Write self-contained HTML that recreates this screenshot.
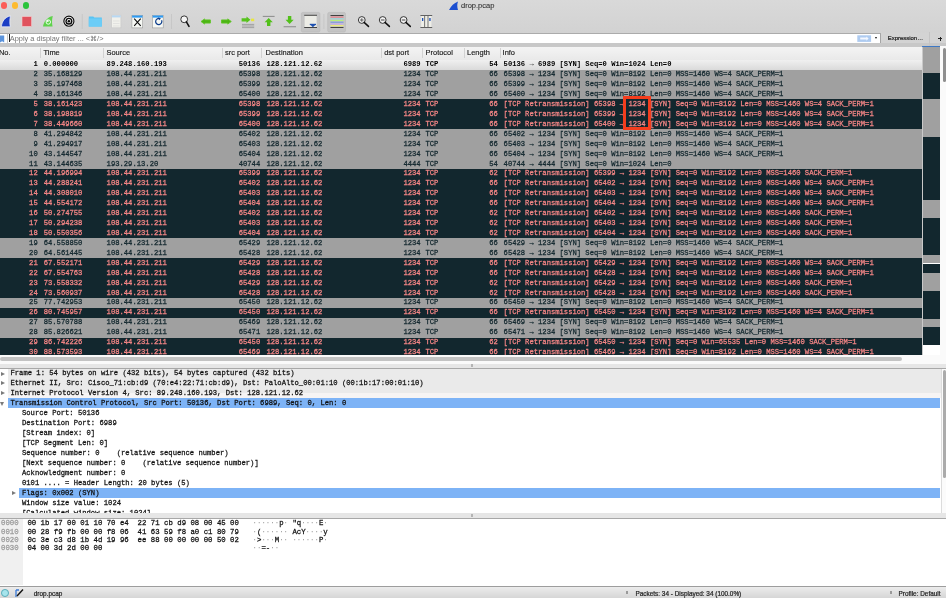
<!DOCTYPE html>
<html><head><meta charset="utf-8"><style>
*{margin:0;padding:0;box-sizing:border-box}
html,body{width:946px;height:598px;overflow:hidden;background:#fff;position:relative}
#wrap{position:absolute;left:0;top:0;width:946px;height:598px;will-change:transform}
body{font-family:"Liberation Sans",sans-serif;-webkit-font-smoothing:antialiased}
.abs{position:absolute}
#tb{position:absolute;left:0;top:0;width:946px;height:33px;background:linear-gradient(#d9d9d9,#d2d2d2)}
#title{position:absolute;left:461px;top:1.2px;font-size:7.5px;color:#333;white-space:pre;-webkit-text-stroke:0.1px #333}
#filt{position:absolute;left:0;top:33px;width:946px;height:14px;background:#d3d3d3}
#fin{position:absolute;left:0;top:32.9px;width:881px;height:10.1px;background:#fff;border-top:0.8px solid #ababab;border-right:1px solid #a5a5a5}
#ph{position:absolute;left:9.8px;top:34.2px;font-size:7.4px;color:#737373;white-space:pre}
#hdr{position:absolute;left:0;top:46.9px;width:922px;height:13px;background:linear-gradient(#f4f4f4,#e9e9e9)}
.ht{position:absolute;top:1.6px;font-size:7.45px;color:#1a1a1a;white-space:pre;-webkit-text-stroke:0.15px #1a1a1a}
.hsep{position:absolute;top:1.5px;width:1px;height:10px;background:#d2d2d2}
#plist{position:absolute;left:0;top:0;width:922px;height:355px;overflow:hidden}
.row{position:absolute;left:0;width:922px;height:9.94px;font-family:"Liberation Mono",monospace;font-size:7.185px;white-space:pre;-webkit-text-stroke:0.25px currentColor}
.rs{background:linear-gradient(#f0f0f0,#dadada);color:#000;font-weight:bold;-webkit-text-stroke:0}
.rg{background:#a0a0a0;color:#12272e}
.rd{background:#12272e;color:#f78787}
.c{position:absolute;top:0.7px;line-height:8px;transform:scaleY(1.1);transform-origin:0 75%}
.dt{position:absolute;font-family:"Liberation Mono",monospace;font-size:7.185px;white-space:pre;color:#111;line-height:8px;margin-top:0.6px;transform:scaleY(1.1);transform-origin:0 75%;-webkit-text-stroke:0.25px currentColor}
.dsel{position:absolute;width:940.3px;height:9.7px;background:#7db3f6}
.arr{position:absolute;width:0;height:0}
.ar{border-left:4px solid #7a7a7a;border-top:2.5px solid transparent;border-bottom:2.5px solid transparent}
.ad{border-top:4px solid #7a7a7a;border-left:2.5px solid transparent;border-right:2.5px solid transparent}
.hx{position:absolute;font-family:"Liberation Mono",monospace;font-size:7.35px;white-space:pre;color:#111;line-height:8px;transform:scaleY(1.1);transform-origin:0 75%;-webkit-text-stroke:0.25px currentColor}
.off{color:#9a9a9a}
.dot{font-weight:normal;color:#9a9a9a;-webkit-text-stroke:0}
#status{position:absolute;left:0;top:585.5px;width:946px;height:12.5px;background:linear-gradient(#ececec,#d6d6d6);border-top:1px solid #9d9d9d}
.st{position:absolute;font-size:6.42px;color:#1d1d1d;white-space:pre;-webkit-text-stroke:0.2px #1d1d1d}
</style></head><body><div id="wrap">
<div id="tb"></div>
<div class="abs" style="left:0.6px;top:2.3px;width:6.4px;height:6.4px;border-radius:50%;background:#fb5d57"></div>
<div class="abs" style="left:11.6px;top:2.3px;width:6.4px;height:6.4px;border-radius:50%;background:#fdbb2f"></div>
<div class="abs" style="left:22.6px;top:2.3px;width:6.4px;height:6.4px;border-radius:50%;background:#2bc43c"></div>
<svg class="abs" style="left:448px;top:1px" width="11" height="10" viewBox="0 0 11 10"><path d="M1 9 C3 5 6 2 10 0.5 C9 3 9 6 10 9 Z" fill="#1c4fd0"/></svg>
<div id="title">drop.pcap</div>
<svg class="abs" style="left:0;top:0" width="946" height="33" viewBox="0 0 946 33">
<!-- shark fin -->
<path d="M1.4 26.8 C1.9 21 5.2 17 10.5 15.9 C9.6 19.6 9.6 23.2 10.3 26.8 Z" fill="#1d3ec4" stroke="#f4f6ff" stroke-width="0.7"/>
<!-- stop -->
<rect x="22" y="16.5" width="9.6" height="9.9" fill="#e0525d" stroke="#f3d0d0" stroke-width="0.6"/>
<!-- restart fin -->
<path d="M43 26.6 C44 21 47.5 17.2 52.8 16 C51.8 19.5 51.8 23 52.6 26.6 Z" fill="#5fd24c"/>
<circle cx="48.3" cy="22" r="2.2" fill="none" stroke="#eaffea" stroke-width="1"/>
<circle cx="47.8" cy="21" r="0.9" fill="#fff"/>
<!-- options gear -->
<circle cx="68.9" cy="21.2" r="6" fill="#f6f6f6"/>
<circle cx="68.9" cy="21.2" r="5.05" fill="none" stroke="#0a0a0a" stroke-width="1.2"/>
<circle cx="68.9" cy="21.2" r="3.5" fill="#0a0a0a"/>
<circle cx="68.9" cy="21.2" r="2.1" fill="#fff"/>
<circle cx="68.9" cy="21.2" r="1.3" fill="#0a0a0a"/>
<!-- sep -->
<rect x="81.8" y="14" width="0.8" height="15" fill="#c4c4c4"/>
<!-- folder -->
<path d="M88.8 16.4 h4.5 l1 1.2 h7.5 v9 h-13 Z" fill="#58c3f3"/>
<rect x="88.8" y="18.5" width="13" height="8.1" fill="#6ccdf7"/>
<!-- save disabled -->
<rect x="111.7" y="15.2" width="9.2" height="12.6" fill="#f1f1ec" stroke="#c9c9c9" stroke-width="0.6"/>
<rect x="111.9" y="15.4" width="8.8" height="2" fill="#b8d8f2"/>
<path d="M113 21 h6.5 M113 23.5 h6.5 M113 26 h6.5" stroke="#d8d8d8" stroke-width="0.6"/>
<!-- close -->
<rect x="131.9" y="15.3" width="10.8" height="12.6" fill="#f6f8f4" stroke="#9a9a9a" stroke-width="0.6"/>
<rect x="132.1" y="15.5" width="10.4" height="2.1" fill="#2d9af2"/>
<path d="M134.2 18.6 L140.7 25.8 M140.7 18.6 L134.2 25.8" stroke="#0d0d0d" stroke-width="1.1"/>
<!-- reload -->
<rect x="152.4" y="15.3" width="10.8" height="12.6" fill="#f6f8f4" stroke="#9a9a9a" stroke-width="0.6"/>
<rect x="152.6" y="15.5" width="10.4" height="2.1" fill="#2d9af2"/>
<path d="M159.8 18.6 A3.1 3.1 0 1 0 161.6 20.3" fill="none" stroke="#0b3c8c" stroke-width="1.2"/>
<path d="M158.3 17.6 L161 18.6 L159 20.2 Z" fill="#0b3c8c"/>
<!-- sep -->
<rect x="171" y="14" width="0.8" height="15" fill="#c4c4c4"/>
<!-- find -->
<circle cx="184.2" cy="19.3" r="3.4" fill="#f4f4f4" stroke="#222" stroke-width="0.9"/>
<path d="M186.4 21.9 L189 26.3" stroke="#111" stroke-width="1.6" stroke-linecap="round"/>
<!-- back -->
<path d="M201 21.5 L204.6 18.9 V19.9 H210.4 V23.1 H204.6 V24.1 Z" fill="#4cb514" stroke="#62c428" stroke-width="0.9" stroke-linejoin="round"/>
<!-- forward -->
<path d="M231.3 21.5 L227.7 18.9 V19.9 H221.5 V23.1 H227.7 V24.1 Z" fill="#4cb514" stroke="#62c428" stroke-width="0.9" stroke-linejoin="round"/>
<!-- go to packet -->
<path d="M250.4 19.8 L246.5 16.6 V18.2 H241.6 V21.4 H246.5 V23.0 Z" fill="#56c21c"/>
<rect x="251" y="18.6" width="3.2" height="2.6" fill="#e9e640"/>
<path d="M242 24.4 h12.2 M242 26 h12.2 M242 27.6 h12.2" stroke="#8c8c8c" stroke-width="0.7"/>
<!-- first packet -->
<rect x="262.8" y="15.9" width="11.8" height="0.8" fill="#777"/>
<path d="M268.7 18 L272.8 22.2 H270.4 V25.9 H267 V22.2 H264.6 Z" fill="#52c01a"/>
<!-- last packet -->
<rect x="283.6" y="26.4" width="12.4" height="0.8" fill="#777"/>
<path d="M289.6 24 L293.7 19.8 H291.3 V16.1 H287.9 V19.8 H285.5 Z" fill="#52c01a"/>
<!-- autoscroll pressed -->
<rect x="301.3" y="12.4" width="18.6" height="19.6" rx="1.5" fill="#c4c4c4" stroke="#b8b8b8" stroke-width="0.6"/>
<rect x="304.6" y="15.3" width="12" height="12.2" fill="#ecece6"/>
<rect x="304.2" y="14.8" width="12.8" height="0.9" fill="#333"/>
<rect x="304.2" y="27.1" width="12.8" height="0.9" fill="#333"/>
<path d="M309.8 24.2 H316 L312.9 27.3 Z" fill="#1d50b0"/>
<rect x="309.8" y="23.8" width="6.2" height="1.3" fill="#1d50b0"/>
<!-- sep -->
<rect x="323.5" y="14" width="0.8" height="15" fill="#c4c4c4"/>
<!-- colorize pressed -->
<rect x="327.7" y="12.4" width="17.8" height="19.6" rx="1.5" fill="#c4c4c4" stroke="#b8b8b8" stroke-width="0.6"/>
<rect x="330.5" y="15" width="13" height="0.9" fill="#333"/>
<rect x="330.5" y="16.6" width="13" height="1.0" fill="#ef6f7c"/>
<rect x="330.5" y="18.3" width="13" height="1.0" fill="#8fdbe0"/>
<rect x="330.5" y="19.9" width="13" height="1.1" fill="#b8f07c"/>
<rect x="330.5" y="21.7" width="13" height="1.0" fill="#6e96e0"/>
<rect x="330.5" y="23.4" width="13" height="1.0" fill="#c8a8f0"/>
<rect x="330.5" y="25.1" width="13" height="1.1" fill="#f0f070"/>
<rect x="330.5" y="27" width="13" height="0.9" fill="#333"/>
<!-- zoom in -->
<circle cx="361.8" cy="20" r="3.4" fill="#f2f2f2" stroke="#222" stroke-width="0.9"/>
<path d="M364.1 22.4 L368.5 26.4" stroke="#111" stroke-width="1.5" stroke-linecap="round"/>
<path d="M360 20 h3.6 M361.8 18.2 v3.6" stroke="#444" stroke-width="0.8"/>
<!-- zoom out -->
<circle cx="382.7" cy="20" r="3.4" fill="#f2f2f2" stroke="#222" stroke-width="0.9"/>
<path d="M385 22.4 L389.4 26.4" stroke="#111" stroke-width="1.5" stroke-linecap="round"/>
<path d="M380.9 20 h3.6" stroke="#444" stroke-width="1"/>
<!-- zoom normal -->
<circle cx="403.6" cy="20" r="3.4" fill="#f2f2f2" stroke="#222" stroke-width="0.9"/>
<path d="M405.9 22.4 L410.3 26.4" stroke="#111" stroke-width="1.5" stroke-linecap="round"/>
<path d="M401.8 20 h3.6" stroke="#444" stroke-width="1"/>
<!-- resize columns -->
<rect x="420.4" y="15.2" width="11.8" height="0.8" fill="#444"/>
<rect x="420.4" y="27" width="11.8" height="0.8" fill="#444"/>
<rect x="421.2" y="16" width="10.2" height="11" fill="#efefe8"/>
<rect x="424.3" y="16" width="0.8" height="11" fill="#555"/>
<rect x="427.6" y="16" width="0.8" height="11" fill="#555"/>
<rect x="422" y="18" width="1.3" height="3" fill="#1d4fb8"/>
<rect x="429.3" y="18" width="1.3" height="3" fill="#1d4fb8"/>
<!-- toolbar bottom line -->

</svg>

<div id="filt"></div>
<div id="fin"></div>
<div class="abs" style="left:0;top:43px;width:946px;height:3.9px;background:#c8c8c8"></div>
<svg class="abs" style="left:0;top:34.5px" width="6" height="8" viewBox="0 0 6 8"><path d="M0 0.5 H4.2 V7.6 L2.1 6.2 L0 7.6 Z" fill="#5b93dc"/></svg>
<div class="abs" style="left:6.5px;top:34px;width:1px;height:9px;background:#c8c8c8"></div>
<div class="abs" style="left:8.8px;top:34.4px;width:1px;height:7.8px;background:#222"></div>
<div id="ph">Apply a display filter ... &lt;⌘/&gt;</div>
<svg class="abs" style="left:856.5px;top:34.8px" width="15" height="7.5" viewBox="0 0 15 7.5"><rect x="0.3" y="0.3" width="13.8" height="6.6" fill="#aecbf0"/><path d="M3.2 2.6 H9.4 V1.4 L11.6 3.6 L9.4 5.8 V4.6 H3.2 Z" fill="#f4f8ff"/></svg>
<div class="abs" style="left:874.9px;top:36.9px;width:0;height:0;border-top:2.6px solid #111;border-left:1.8px solid transparent;border-right:1.8px solid transparent"></div>
<div class="st" style="left:887.8px;top:35.3px;font-size:5.95px;color:#1a1a1a;-webkit-text-stroke:0.2px #1a1a1a">Expression…</div>
<div class="abs" style="left:929.2px;top:32px;width:0.8px;height:14px;background:#c4c4c4"></div>
<div class="abs" style="left:937.9px;top:38.3px;width:4.3px;height:1.1px;background:#222"></div><div class="abs" style="left:939.5px;top:36.6px;width:1.1px;height:4.3px;background:#222"></div>
<div id="plist">
<div id="hdr"><div class="ht" style="left:-1.1px">No.</div>
<div class="ht" style="left:43.5px">Time</div>
<div class="hsep" style="left:40.2px"></div>
<div class="ht" style="left:106.5px">Source</div>
<div class="hsep" style="left:103.1px"></div>
<div class="ht" style="left:225.0px">src port</div>
<div class="hsep" style="left:222.3px"></div>
<div class="ht" style="left:265.6px">Destination</div>
<div class="hsep" style="left:261.2px"></div>
<div class="ht" style="left:384.2px">dst port</div>
<div class="hsep" style="left:381.4px"></div>
<div class="ht" style="left:425.6px">Protocol</div>
<div class="hsep" style="left:422.4px"></div>
<div class="ht" style="left:467.1px">Length</div>
<div class="hsep" style="left:463.5px"></div>
<div class="ht" style="left:502.6px">Info</div>
<div class="hsep" style="left:499.5px"></div></div>
<div class="row rs" style="top:59.60px"><span class="c r" style="right:884.3px">1</span><span class="c" style="left:43.7px">0.000000</span><span class="c" style="left:106.6px">89.248.160.193</span><span class="c r" style="right:661.8px">50136</span><span class="c" style="left:266.4px">128.121.12.62</span><span class="c r" style="right:501.4px">6989</span><span class="c" style="left:425.5px">TCP</span><span class="c r" style="right:424.1px">54</span><span class="c" style="left:503.6px">50136 → 6989 [SYN] Seq=0 Win=1024 Len=0</span></div>
<div class="row rg" style="top:69.53px"><span class="c r" style="right:884.3px">2</span><span class="c" style="left:43.7px">35.168129</span><span class="c" style="left:106.6px">108.44.231.211</span><span class="c r" style="right:661.8px">65398</span><span class="c" style="left:266.4px">128.121.12.62</span><span class="c r" style="right:501.4px">1234</span><span class="c" style="left:425.5px">TCP</span><span class="c r" style="right:424.1px">66</span><span class="c" style="left:503.6px">65398 → 1234 [SYN] Seq=0 Win=8192 Len=0 MSS=1460 WS=4 SACK_PERM=1</span></div>
<div class="row rg" style="top:79.45px"><span class="c r" style="right:884.3px">3</span><span class="c" style="left:43.7px">35.197468</span><span class="c" style="left:106.6px">108.44.231.211</span><span class="c r" style="right:661.8px">65399</span><span class="c" style="left:266.4px">128.121.12.62</span><span class="c r" style="right:501.4px">1234</span><span class="c" style="left:425.5px">TCP</span><span class="c r" style="right:424.1px">66</span><span class="c" style="left:503.6px">65399 → 1234 [SYN] Seq=0 Win=8192 Len=0 MSS=1460 WS=4 SACK_PERM=1</span></div>
<div class="row rg" style="top:89.38px"><span class="c r" style="right:884.3px">4</span><span class="c" style="left:43.7px">38.161346</span><span class="c" style="left:106.6px">108.44.231.211</span><span class="c r" style="right:661.8px">65400</span><span class="c" style="left:266.4px">128.121.12.62</span><span class="c r" style="right:501.4px">1234</span><span class="c" style="left:425.5px">TCP</span><span class="c r" style="right:424.1px">66</span><span class="c" style="left:503.6px">65400 → 1234 [SYN] Seq=0 Win=8192 Len=0 MSS=1460 WS=4 SACK_PERM=1</span></div>
<div class="row rd" style="top:99.30px"><span class="c r" style="right:884.3px">5</span><span class="c" style="left:43.7px">38.161423</span><span class="c" style="left:106.6px">108.44.231.211</span><span class="c r" style="right:661.8px">65398</span><span class="c" style="left:266.4px">128.121.12.62</span><span class="c r" style="right:501.4px">1234</span><span class="c" style="left:425.5px">TCP</span><span class="c r" style="right:424.1px">66</span><span class="c" style="left:503.6px">[TCP Retransmission] 65398 → 1234 [SYN] Seq=0 Win=8192 Len=0 MSS=1460 WS=4 SACK_PERM=1</span></div>
<div class="row rd" style="top:109.22px"><span class="c r" style="right:884.3px">6</span><span class="c" style="left:43.7px">38.198819</span><span class="c" style="left:106.6px">108.44.231.211</span><span class="c r" style="right:661.8px">65399</span><span class="c" style="left:266.4px">128.121.12.62</span><span class="c r" style="right:501.4px">1234</span><span class="c" style="left:425.5px">TCP</span><span class="c r" style="right:424.1px">66</span><span class="c" style="left:503.6px">[TCP Retransmission] 65399 → 1234 [SYN] Seq=0 Win=8192 Len=0 MSS=1460 WS=4 SACK_PERM=1</span></div>
<div class="row rd" style="top:119.15px"><span class="c r" style="right:884.3px">7</span><span class="c" style="left:43.7px">38.449660</span><span class="c" style="left:106.6px">108.44.231.211</span><span class="c r" style="right:661.8px">65400</span><span class="c" style="left:266.4px">128.121.12.62</span><span class="c r" style="right:501.4px">1234</span><span class="c" style="left:425.5px">TCP</span><span class="c r" style="right:424.1px">66</span><span class="c" style="left:503.6px">[TCP Retransmission] 65400 → 1234 [SYN] Seq=0 Win=8192 Len=0 MSS=1460 WS=4 SACK_PERM=1</span></div>
<div class="row rg" style="top:129.08px"><span class="c r" style="right:884.3px">8</span><span class="c" style="left:43.7px">41.294842</span><span class="c" style="left:106.6px">108.44.231.211</span><span class="c r" style="right:661.8px">65402</span><span class="c" style="left:266.4px">128.121.12.62</span><span class="c r" style="right:501.4px">1234</span><span class="c" style="left:425.5px">TCP</span><span class="c r" style="right:424.1px">66</span><span class="c" style="left:503.6px">65402 → 1234 [SYN] Seq=0 Win=8192 Len=0 MSS=1460 WS=4 SACK_PERM=1</span></div>
<div class="row rg" style="top:139.00px"><span class="c r" style="right:884.3px">9</span><span class="c" style="left:43.7px">41.294917</span><span class="c" style="left:106.6px">108.44.231.211</span><span class="c r" style="right:661.8px">65403</span><span class="c" style="left:266.4px">128.121.12.62</span><span class="c r" style="right:501.4px">1234</span><span class="c" style="left:425.5px">TCP</span><span class="c r" style="right:424.1px">66</span><span class="c" style="left:503.6px">65403 → 1234 [SYN] Seq=0 Win=8192 Len=0 MSS=1460 WS=4 SACK_PERM=1</span></div>
<div class="row rg" style="top:148.93px"><span class="c r" style="right:884.3px">10</span><span class="c" style="left:43.7px">43.144547</span><span class="c" style="left:106.6px">108.44.231.211</span><span class="c r" style="right:661.8px">65404</span><span class="c" style="left:266.4px">128.121.12.62</span><span class="c r" style="right:501.4px">1234</span><span class="c" style="left:425.5px">TCP</span><span class="c r" style="right:424.1px">66</span><span class="c" style="left:503.6px">65404 → 1234 [SYN] Seq=0 Win=8192 Len=0 MSS=1460 WS=4 SACK_PERM=1</span></div>
<div class="row rg" style="top:158.85px"><span class="c r" style="right:884.3px">11</span><span class="c" style="left:43.7px">43.144635</span><span class="c" style="left:106.6px">193.29.13.20</span><span class="c r" style="right:661.8px">40744</span><span class="c" style="left:266.4px">128.121.12.62</span><span class="c r" style="right:501.4px">4444</span><span class="c" style="left:425.5px">TCP</span><span class="c r" style="right:424.1px">54</span><span class="c" style="left:503.6px">40744 → 4444 [SYN] Seq=0 Win=1024 Len=0</span></div>
<div class="row rd" style="top:168.78px"><span class="c r" style="right:884.3px">12</span><span class="c" style="left:43.7px">44.196994</span><span class="c" style="left:106.6px">108.44.231.211</span><span class="c r" style="right:661.8px">65399</span><span class="c" style="left:266.4px">128.121.12.62</span><span class="c r" style="right:501.4px">1234</span><span class="c" style="left:425.5px">TCP</span><span class="c r" style="right:424.1px">62</span><span class="c" style="left:503.6px">[TCP Retransmission] 65399 → 1234 [SYN] Seq=0 Win=8192 Len=0 MSS=1460 SACK_PERM=1</span></div>
<div class="row rd" style="top:178.70px"><span class="c r" style="right:884.3px">13</span><span class="c" style="left:43.7px">44.288241</span><span class="c" style="left:106.6px">108.44.231.211</span><span class="c r" style="right:661.8px">65402</span><span class="c" style="left:266.4px">128.121.12.62</span><span class="c r" style="right:501.4px">1234</span><span class="c" style="left:425.5px">TCP</span><span class="c r" style="right:424.1px">66</span><span class="c" style="left:503.6px">[TCP Retransmission] 65402 → 1234 [SYN] Seq=0 Win=8192 Len=0 MSS=1460 WS=4 SACK_PERM=1</span></div>
<div class="row rd" style="top:188.62px"><span class="c r" style="right:884.3px">14</span><span class="c" style="left:43.7px">44.308010</span><span class="c" style="left:106.6px">108.44.231.211</span><span class="c r" style="right:661.8px">65403</span><span class="c" style="left:266.4px">128.121.12.62</span><span class="c r" style="right:501.4px">1234</span><span class="c" style="left:425.5px">TCP</span><span class="c r" style="right:424.1px">66</span><span class="c" style="left:503.6px">[TCP Retransmission] 65403 → 1234 [SYN] Seq=0 Win=8192 Len=0 MSS=1460 WS=4 SACK_PERM=1</span></div>
<div class="row rd" style="top:198.55px"><span class="c r" style="right:884.3px">15</span><span class="c" style="left:43.7px">44.554172</span><span class="c" style="left:106.6px">108.44.231.211</span><span class="c r" style="right:661.8px">65404</span><span class="c" style="left:266.4px">128.121.12.62</span><span class="c r" style="right:501.4px">1234</span><span class="c" style="left:425.5px">TCP</span><span class="c r" style="right:424.1px">66</span><span class="c" style="left:503.6px">[TCP Retransmission] 65404 → 1234 [SYN] Seq=0 Win=8192 Len=0 MSS=1460 WS=4 SACK_PERM=1</span></div>
<div class="row rd" style="top:208.47px"><span class="c r" style="right:884.3px">16</span><span class="c" style="left:43.7px">50.274755</span><span class="c" style="left:106.6px">108.44.231.211</span><span class="c r" style="right:661.8px">65402</span><span class="c" style="left:266.4px">128.121.12.62</span><span class="c r" style="right:501.4px">1234</span><span class="c" style="left:425.5px">TCP</span><span class="c r" style="right:424.1px">62</span><span class="c" style="left:503.6px">[TCP Retransmission] 65402 → 1234 [SYN] Seq=0 Win=8192 Len=0 MSS=1460 SACK_PERM=1</span></div>
<div class="row rd" style="top:218.40px"><span class="c r" style="right:884.3px">17</span><span class="c" style="left:43.7px">50.294238</span><span class="c" style="left:106.6px">108.44.231.211</span><span class="c r" style="right:661.8px">65403</span><span class="c" style="left:266.4px">128.121.12.62</span><span class="c r" style="right:501.4px">1234</span><span class="c" style="left:425.5px">TCP</span><span class="c r" style="right:424.1px">62</span><span class="c" style="left:503.6px">[TCP Retransmission] 65403 → 1234 [SYN] Seq=0 Win=8192 Len=0 MSS=1460 SACK_PERM=1</span></div>
<div class="row rd" style="top:228.33px"><span class="c r" style="right:884.3px">18</span><span class="c" style="left:43.7px">50.550356</span><span class="c" style="left:106.6px">108.44.231.211</span><span class="c r" style="right:661.8px">65404</span><span class="c" style="left:266.4px">128.121.12.62</span><span class="c r" style="right:501.4px">1234</span><span class="c" style="left:425.5px">TCP</span><span class="c r" style="right:424.1px">62</span><span class="c" style="left:503.6px">[TCP Retransmission] 65404 → 1234 [SYN] Seq=0 Win=8192 Len=0 MSS=1460 SACK_PERM=1</span></div>
<div class="row rg" style="top:238.25px"><span class="c r" style="right:884.3px">19</span><span class="c" style="left:43.7px">64.558850</span><span class="c" style="left:106.6px">108.44.231.211</span><span class="c r" style="right:661.8px">65429</span><span class="c" style="left:266.4px">128.121.12.62</span><span class="c r" style="right:501.4px">1234</span><span class="c" style="left:425.5px">TCP</span><span class="c r" style="right:424.1px">66</span><span class="c" style="left:503.6px">65429 → 1234 [SYN] Seq=0 Win=8192 Len=0 MSS=1460 WS=4 SACK_PERM=1</span></div>
<div class="row rg" style="top:248.18px"><span class="c r" style="right:884.3px">20</span><span class="c" style="left:43.7px">64.561445</span><span class="c" style="left:106.6px">108.44.231.211</span><span class="c r" style="right:661.8px">65428</span><span class="c" style="left:266.4px">128.121.12.62</span><span class="c r" style="right:501.4px">1234</span><span class="c" style="left:425.5px">TCP</span><span class="c r" style="right:424.1px">66</span><span class="c" style="left:503.6px">65428 → 1234 [SYN] Seq=0 Win=8192 Len=0 MSS=1460 WS=4 SACK_PERM=1</span></div>
<div class="row rd" style="top:258.10px"><span class="c r" style="right:884.3px">21</span><span class="c" style="left:43.7px">67.552171</span><span class="c" style="left:106.6px">108.44.231.211</span><span class="c r" style="right:661.8px">65429</span><span class="c" style="left:266.4px">128.121.12.62</span><span class="c r" style="right:501.4px">1234</span><span class="c" style="left:425.5px">TCP</span><span class="c r" style="right:424.1px">66</span><span class="c" style="left:503.6px">[TCP Retransmission] 65429 → 1234 [SYN] Seq=0 Win=8192 Len=0 MSS=1460 WS=4 SACK_PERM=1</span></div>
<div class="row rd" style="top:268.03px"><span class="c r" style="right:884.3px">22</span><span class="c" style="left:43.7px">67.554763</span><span class="c" style="left:106.6px">108.44.231.211</span><span class="c r" style="right:661.8px">65428</span><span class="c" style="left:266.4px">128.121.12.62</span><span class="c r" style="right:501.4px">1234</span><span class="c" style="left:425.5px">TCP</span><span class="c r" style="right:424.1px">66</span><span class="c" style="left:503.6px">[TCP Retransmission] 65428 → 1234 [SYN] Seq=0 Win=8192 Len=0 MSS=1460 WS=4 SACK_PERM=1</span></div>
<div class="row rd" style="top:277.95px"><span class="c r" style="right:884.3px">23</span><span class="c" style="left:43.7px">73.558332</span><span class="c" style="left:106.6px">108.44.231.211</span><span class="c r" style="right:661.8px">65429</span><span class="c" style="left:266.4px">128.121.12.62</span><span class="c r" style="right:501.4px">1234</span><span class="c" style="left:425.5px">TCP</span><span class="c r" style="right:424.1px">62</span><span class="c" style="left:503.6px">[TCP Retransmission] 65429 → 1234 [SYN] Seq=0 Win=8192 Len=0 MSS=1460 SACK_PERM=1</span></div>
<div class="row rd" style="top:287.88px"><span class="c r" style="right:884.3px">24</span><span class="c" style="left:43.7px">73.560937</span><span class="c" style="left:106.6px">108.44.231.211</span><span class="c r" style="right:661.8px">65428</span><span class="c" style="left:266.4px">128.121.12.62</span><span class="c r" style="right:501.4px">1234</span><span class="c" style="left:425.5px">TCP</span><span class="c r" style="right:424.1px">62</span><span class="c" style="left:503.6px">[TCP Retransmission] 65428 → 1234 [SYN] Seq=0 Win=8192 Len=0 MSS=1460 SACK_PERM=1</span></div>
<div class="row rg" style="top:297.80px"><span class="c r" style="right:884.3px">25</span><span class="c" style="left:43.7px">77.742953</span><span class="c" style="left:106.6px">108.44.231.211</span><span class="c r" style="right:661.8px">65450</span><span class="c" style="left:266.4px">128.121.12.62</span><span class="c r" style="right:501.4px">1234</span><span class="c" style="left:425.5px">TCP</span><span class="c r" style="right:424.1px">66</span><span class="c" style="left:503.6px">65450 → 1234 [SYN] Seq=0 Win=8192 Len=0 MSS=1460 WS=4 SACK_PERM=1</span></div>
<div class="row rd" style="top:307.73px"><span class="c r" style="right:884.3px">26</span><span class="c" style="left:43.7px">80.745957</span><span class="c" style="left:106.6px">108.44.231.211</span><span class="c r" style="right:661.8px">65450</span><span class="c" style="left:266.4px">128.121.12.62</span><span class="c r" style="right:501.4px">1234</span><span class="c" style="left:425.5px">TCP</span><span class="c r" style="right:424.1px">66</span><span class="c" style="left:503.6px">[TCP Retransmission] 65450 → 1234 [SYN] Seq=0 Win=8192 Len=0 MSS=1460 WS=4 SACK_PERM=1</span></div>
<div class="row rg" style="top:317.65px"><span class="c r" style="right:884.3px">27</span><span class="c" style="left:43.7px">85.570788</span><span class="c" style="left:106.6px">108.44.231.211</span><span class="c r" style="right:661.8px">65469</span><span class="c" style="left:266.4px">128.121.12.62</span><span class="c r" style="right:501.4px">1234</span><span class="c" style="left:425.5px">TCP</span><span class="c r" style="right:424.1px">66</span><span class="c" style="left:503.6px">65469 → 1234 [SYN] Seq=0 Win=8192 Len=0 MSS=1460 WS=4 SACK_PERM=1</span></div>
<div class="row rg" style="top:327.58px"><span class="c r" style="right:884.3px">28</span><span class="c" style="left:43.7px">85.826621</span><span class="c" style="left:106.6px">108.44.231.211</span><span class="c r" style="right:661.8px">65471</span><span class="c" style="left:266.4px">128.121.12.62</span><span class="c r" style="right:501.4px">1234</span><span class="c" style="left:425.5px">TCP</span><span class="c r" style="right:424.1px">66</span><span class="c" style="left:503.6px">65471 → 1234 [SYN] Seq=0 Win=8192 Len=0 MSS=1460 WS=4 SACK_PERM=1</span></div>
<div class="row rd" style="top:337.50px"><span class="c r" style="right:884.3px">29</span><span class="c" style="left:43.7px">86.742226</span><span class="c" style="left:106.6px">108.44.231.211</span><span class="c r" style="right:661.8px">65450</span><span class="c" style="left:266.4px">128.121.12.62</span><span class="c r" style="right:501.4px">1234</span><span class="c" style="left:425.5px">TCP</span><span class="c r" style="right:424.1px">62</span><span class="c" style="left:503.6px">[TCP Retransmission] 65450 → 1234 [SYN] Seq=0 Win=65535 Len=0 MSS=1460 SACK_PERM=1</span></div>
<div class="row rd" style="top:347.43px"><span class="c r" style="right:884.3px">30</span><span class="c" style="left:43.7px">88.573593</span><span class="c" style="left:106.6px">108.44.231.211</span><span class="c r" style="right:661.8px">65469</span><span class="c" style="left:266.4px">128.121.12.62</span><span class="c r" style="right:501.4px">1234</span><span class="c" style="left:425.5px">TCP</span><span class="c r" style="right:424.1px">66</span><span class="c" style="left:503.6px">[TCP Retransmission] 65469 → 1234 [SYN] Seq=0 Win=8192 Len=0 MSS=1460 WS=4 SACK_PERM=1</span></div>
</div>
<div class="abs" style="left:922px;top:46px;width:18px;height:1px;background:#3e78c4"></div>
<div class="abs" style="left:922px;top:46.5px;width:0.6px;height:310px;background:#c9c9c9"></div>
<div style="position:absolute;left:922.6px;width:17.5px;top:46.5px;height:26.1px;background:#a0a0a0"></div>
<div style="position:absolute;left:922.6px;width:17.5px;top:72.6px;height:26.8px;background:#12272e"></div>
<div style="position:absolute;left:922.6px;width:17.5px;top:99.4px;height:37.6px;background:#a0a0a0"></div>
<div style="position:absolute;left:922.6px;width:17.5px;top:137px;height:63.3px;background:#12272e"></div>
<div style="position:absolute;left:922.6px;width:17.5px;top:200.3px;height:18.0px;background:#a0a0a0"></div>
<div style="position:absolute;left:922.6px;width:17.5px;top:218.3px;height:36.5px;background:#12272e"></div>
<div style="position:absolute;left:922.6px;width:17.5px;top:254.8px;height:8.7px;background:#a0a0a0"></div>
<div style="position:absolute;left:922.6px;width:17.5px;top:263.5px;height:9.1px;background:#12272e"></div>
<div style="position:absolute;left:922.6px;width:17.5px;top:272.6px;height:18.4px;background:#a0a0a0"></div>
<div style="position:absolute;left:922.6px;width:17.5px;top:291px;height:28.3px;background:#12272e"></div>
<div style="position:absolute;left:922.6px;width:17.5px;top:319.3px;height:7.7px;background:#a0a0a0"></div>
<div style="position:absolute;left:922.6px;width:17.5px;top:327px;height:18.4px;background:#12272e"></div>
<div style="position:absolute;left:922.6px;width:17.5px;top:345.4px;height:11.6px;background:#ffffff"></div>
<div class="abs" style="left:940px;top:46px;width:6px;height:310px;background:#fafafa"></div>
<div class="abs" style="left:943px;top:48px;width:3.2px;height:33.7px;border-radius:1.6px;background:#8f8f8f"></div>
<!-- red box -->
<div class="abs" style="left:623.2px;top:95.7px;width:27.8px;height:34.2px;border:3.2px solid #f43d1d"></div>
<!-- hscroll -->
<div class="abs" style="left:0;top:355px;width:946px;height:13.5px;background:#fafafa"></div>
<div class="abs" style="left:0;top:356.5px;width:902px;height:4.6px;border-radius:2.3px;background:#c3c3c3"></div>
<div class="abs" style="left:0;top:363.5px;width:946px;height:4.5px;background:#e6e6e6"></div>
<div class="abs" style="left:0;top:367.8px;width:946px;height:1px;background:#a8a8a8"></div>
<!-- details -->
<div class="abs" style="left:8px;top:368.8px;width:932.5px;height:23.9px;background:#eaeaea"></div><div class="abs" style="left:8px;top:392.7px;width:932.5px;height:5.3px;background:#f6f4f4"></div>
<div class="arr ar" style="top:371.50px;left:0.5px"></div><div class="dt" style="top:368.50px;left:10.5px">Frame 1: 54 bytes on wire (432 bits), 54 bytes captured (432 bits)</div>
<div class="arr ar" style="top:381.46px;left:0.5px"></div><div class="dt" style="top:378.46px;left:10.5px">Ethernet II, Src: Cisco_71:cb:d9 (70:e4:22:71:cb:d9), Dst: PaloAlto_00:01:10 (00:1b:17:00:01:10)</div>
<div class="arr ar" style="top:391.43px;left:0.5px"></div><div class="dt" style="top:388.43px;left:10.5px">Internet Protocol Version 4, Src: 89.248.160.193, Dst: 128.121.12.62</div>
<div class="dsel" style="top:398.19px;left:7.9px;width:932.4px"></div><div class="arr ad" style="top:401.89px;left:0px"></div><div class="dt" style="top:398.39px;left:10.5px">Transmission Control Protocol, Src Port: 50136, Dst Port: 6989, Seq: 0, Len: 0</div>
<div class="dt" style="top:408.36px;left:22.0px">Source Port: 50136</div>
<div class="dt" style="top:418.32px;left:22.0px">Destination Port: 6989</div>
<div class="dt" style="top:428.29px;left:22.0px">[Stream index: 0]</div>
<div class="dt" style="top:438.25px;left:22.0px">[TCP Segment Len: 0]</div>
<div class="dt" style="top:448.22px;left:22.0px">Sequence number: 0    (relative sequence number)</div>
<div class="dt" style="top:458.19px;left:22.0px">[Next sequence number: 0    (relative sequence number)]</div>
<div class="dt" style="top:468.15px;left:22.0px">Acknowledgment number: 0</div>
<div class="dt" style="top:478.12px;left:22.0px">0101 .... = Header Length: 20 bytes (5)</div>
<div class="dsel" style="top:487.88px;left:19.4px;width:920.9px"></div><div class="arr ar" style="top:491.08px;left:11.5px"></div><div class="dt" style="top:488.08px;left:22.0px">Flags: 0x002 (SYN)</div>
<div class="dt" style="top:498.04px;left:22.0px">Window size value: 1024</div>
<div class="dt" style="top:508.01px;left:22.0px">[Calculated window size: 1024]</div>
<div class="abs" style="left:941px;top:369px;width:5px;height:144px;background:#fbfbfb"></div>
<div class="abs" style="left:940.6px;top:369px;width:0.6px;height:144px;background:#dcdcdc"></div><div class="abs" style="left:943px;top:369.8px;width:3.2px;height:108.7px;border-radius:1.6px;background:#ababab"></div>
<div class="abs" style="left:0;top:513.2px;width:946px;height:5px;background:#e6e6e6"></div>
<div class="abs" style="left:0;top:517.8px;width:946px;height:1px;background:#a8a8a8"></div>
<div class="abs" style="left:471.2px;top:514.2px;width:2.2px;height:2.8px;background:#b4b4b4"></div>
<div class="abs" style="left:471.2px;top:364.2px;width:2.2px;height:2.8px;background:#b4b4b4"></div>
<!-- hex -->
<div class="abs" style="left:0;top:518.8px;width:946px;height:66.7px;background:#fff"></div>
<div class="abs" style="left:0;top:518.8px;width:22.8px;height:66.7px;background:#f0f0f0"></div>
<div class="hx off" style="top:519.30px;left:1.0px">0000</div><div class="hx" style="top:519.30px;left:27.4px">00 1b 17 00 01 10 70 e4  22 71 cb d9 08 00 45 00</div><div class="hx" style="top:519.30px;left:252.6px"><b class=dot>·</b><b class=dot>·</b><b class=dot>·</b><b class=dot>·</b><b class=dot>·</b><b class=dot>·</b>p<b class=dot>·</b> &quot;q<b class=dot>·</b><b class=dot>·</b><b class=dot>·</b><b class=dot>·</b>E<b class=dot>·</b></div>
<div class="hx off" style="top:527.50px;left:1.0px">0010</div><div class="hx" style="top:527.50px;left:27.4px">00 28 f9 fb 00 00 f8 06  41 63 59 f8 a0 c1 80 79</div><div class="hx" style="top:527.50px;left:252.6px"><b class=dot>·</b>(<b class=dot>·</b><b class=dot>·</b><b class=dot>·</b><b class=dot>·</b><b class=dot>·</b><b class=dot>·</b> AcY<b class=dot>·</b><b class=dot>·</b><b class=dot>·</b><b class=dot>·</b>y</div>
<div class="hx off" style="top:535.70px;left:1.0px">0020</div><div class="hx" style="top:535.70px;left:27.4px">0c 3e c3 d8 1b 4d 19 96  ee 88 00 00 00 00 50 02</div><div class="hx" style="top:535.70px;left:252.6px"><b class=dot>·</b>&gt;<b class=dot>·</b><b class=dot>·</b><b class=dot>·</b>M<b class=dot>·</b><b class=dot>·</b> <b class=dot>·</b><b class=dot>·</b><b class=dot>·</b><b class=dot>·</b><b class=dot>·</b><b class=dot>·</b>P<b class=dot>·</b></div>
<div class="hx off" style="top:543.90px;left:1.0px">0030</div><div class="hx" style="top:543.90px;left:27.4px">04 00 3d 2d 00 00</div><div class="hx" style="top:543.90px;left:252.6px"><b class=dot>·</b><b class=dot>·</b>=-<b class=dot>·</b><b class=dot>·</b></div>
<div id="status"></div>
<div class="abs" style="left:1.2px;top:589.2px;width:7.8px;height:7.8px;border-radius:50%;background:#a6e4ec;border:1px solid #55aab8"></div>
<svg class="abs" style="left:15px;top:588px" width="9" height="10" viewBox="0 0 9 10"><path d="M1 2 h3 M1 2 v7" stroke="#3a7ad8" stroke-width="1.3"/><path d="M2 8 L8 1.5" stroke="#111" stroke-width="1.4"/></svg>
<div class="st" style="left:33.8px;top:589.7px">drop.pcap</div>
<div class="abs" style="left:626px;top:591px;width:2px;height:2.5px;background:#9a9a9a"></div>
<div class="st" style="left:635.5px;top:589.7px">Packets: 34 - Displayed: 34 (100.0%)</div>
<div class="abs" style="left:889.5px;top:591.2px;width:2px;height:2.5px;background:#9a9a9a"></div>
<div class="st" style="left:898.5px;top:589.7px">Profile: Default</div>
</div></body></html>
